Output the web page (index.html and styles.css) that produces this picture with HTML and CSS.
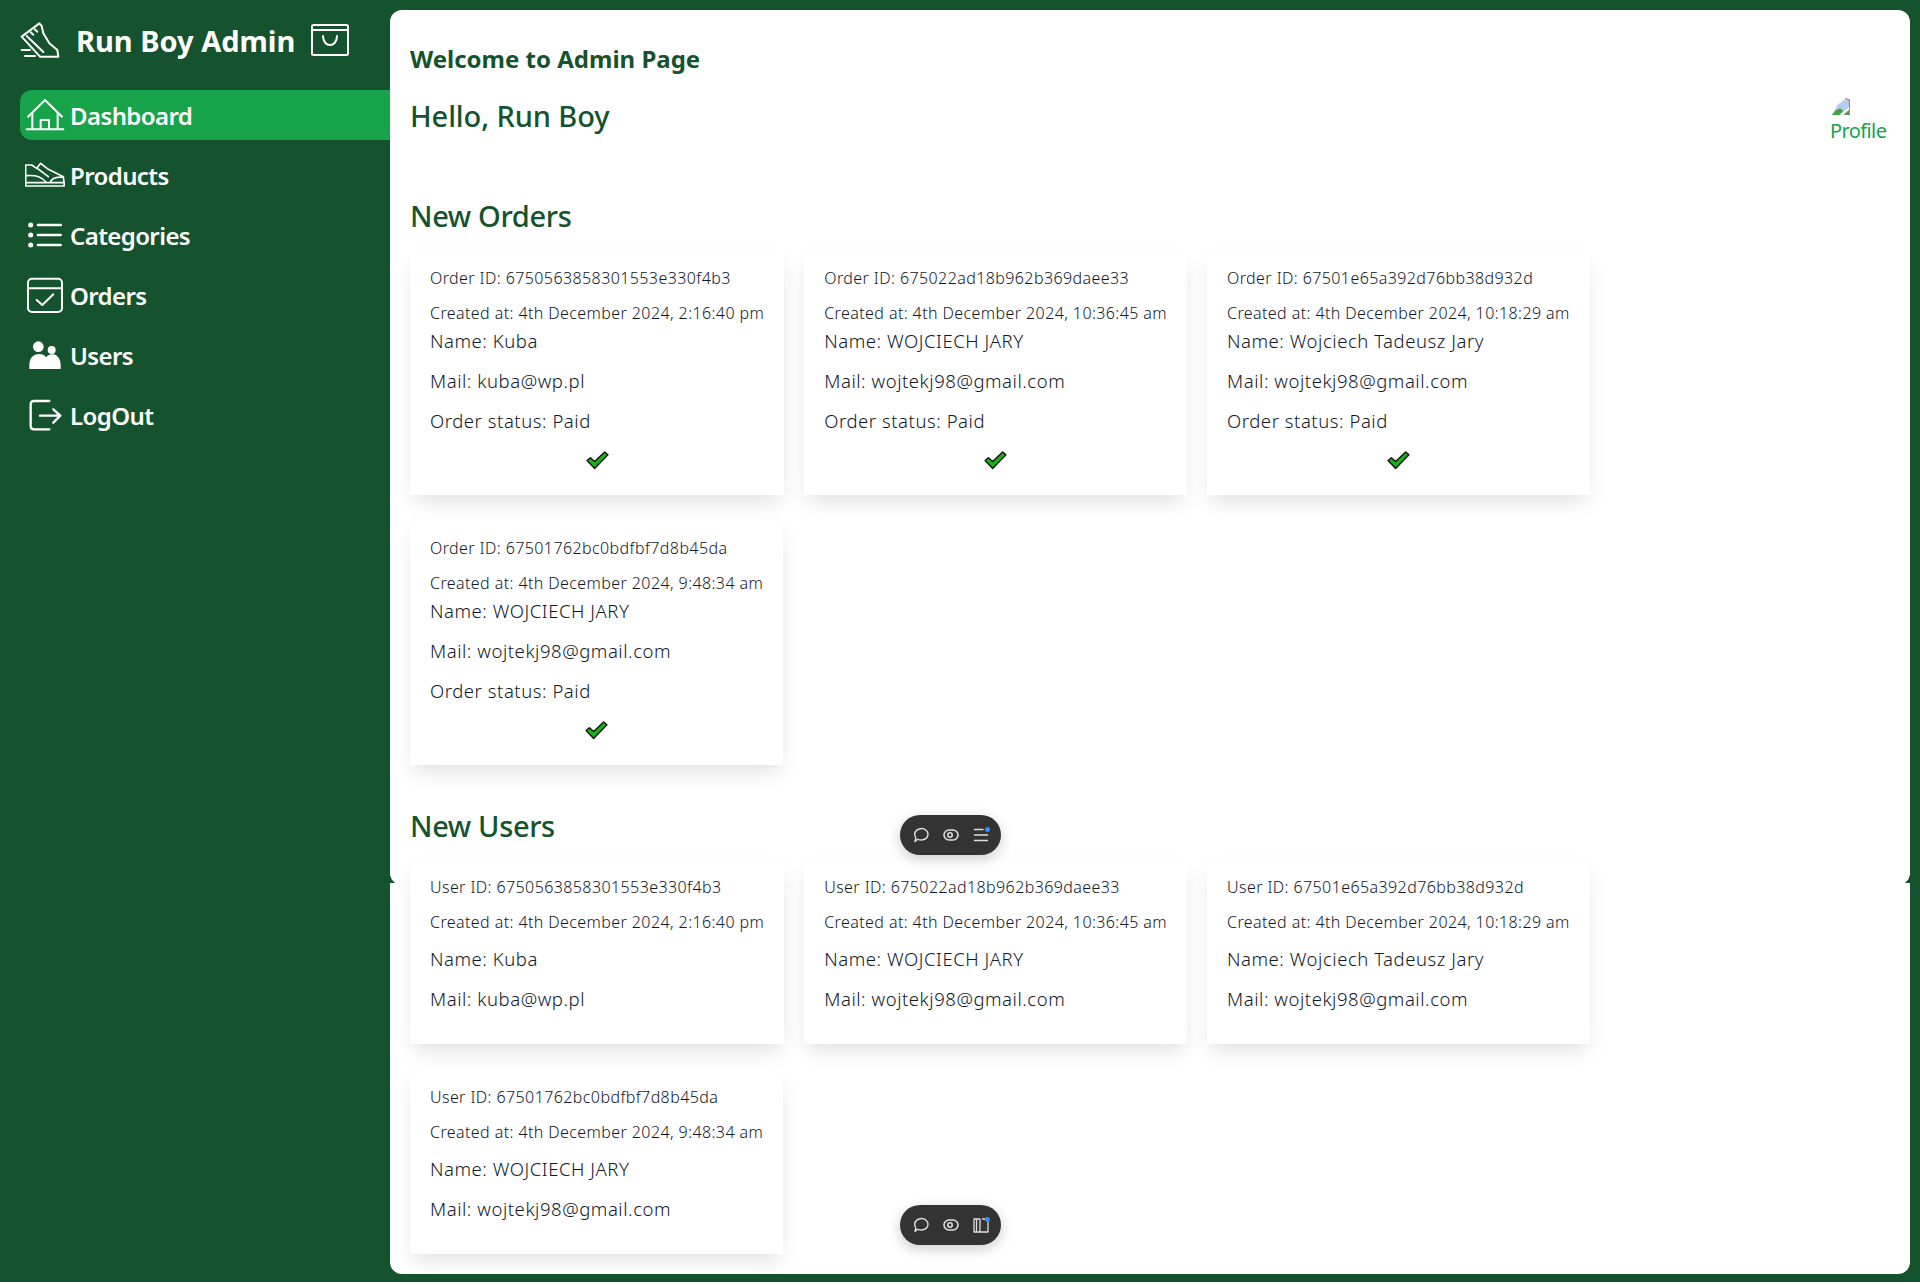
FILE: index.html
```html
<!DOCTYPE html>
<html lang="en">
<head>
    <meta charset="UTF-8">
    <meta name="viewport" content="width=device-width, initial-scale=1.0">
    <title>Run Boy Admin</title>
    <link rel="stylesheet" href="styles.css">
</head>
<body>

<div class="layout">
    <aside class="sidebar">
        <div class="brand">
            <svg class="brand-shoe" viewBox="60 66 120 108" fill="none" stroke="#fff" stroke-width="6" stroke-linejoin="round" stroke-linecap="round">
                <path d="M65 110 L118 70 L125 78 L130 100 L148 130 L172 150 L175 170 L120 170 Z"/>
                <path d="M80 108 L130 156 M92 97 L100 104 M104 88 L112 95"/>
                <path d="M65 150 L90 150 M75 168 L105 168"/>
            </svg>
            <span class="brand-name">Run Boy Admin</span>
            <svg class="brand-bag" viewBox="0 0 38 32" fill="none" stroke="#fff" stroke-width="2" stroke-linejoin="round" stroke-linecap="round">
                <rect x="1" y="1" width="36" height="30" rx="1.500"/>
                <path d="M1 6 L37 6"/>
                <path d="M12 12 C12 24 26 24 26 12"/>
            </svg>
        </div>
        <nav class="nav">
            <a class="nav-item active" href="#">
                <svg class="nav-icon" viewBox="75 291 120 108" fill="none" stroke="#fff" stroke-width="6" stroke-linecap="round" stroke-linejoin="round">
                    <path d="M84 350 L135 300 L186 350"/>
                    <path d="M97 338 L97 386 M173 338 L173 386 M80 388 L190 388"/>
                    <path d="M122 386 L122 360 L147 360 L147 386"/>
                </svg>
                <span>Dashboard</span>
            </a>
            <a class="nav-item" href="#">
                <svg class="nav-icon" viewBox="75 471 120 108" fill="none" stroke="#fff" stroke-width="5" stroke-linecap="round" stroke-linejoin="round">
                    <path d="M77 558 L77 495 L95 495 L110 505 L122 490 L145 508 L190 530 L193 558 Z"/>
                    <path d="M77 548 L193 548 M80 527 C110 525 125 530 140 548 M150 548 C155 535 170 530 190 532"/>
                    <path d="M112 505 L145 530"/>
                </svg>
                <span>Products</span>
            </a>
            <a class="nav-item" href="#">
                <svg class="nav-icon" viewBox="75 651 120 108" fill="none" stroke="#fff" stroke-width="8" stroke-linecap="round">
                    <path d="M114 675 L182 675 M114 705 L182 705 M114 735 L182 735"/>
                    <path d="M92 675 L92.100 675 M92 705 L92.100 705 M92 735 L92.100 735" stroke-width="15"/>
                </svg>
                <span>Categories</span>
            </a>
            <a class="nav-item" href="#">
                <svg class="nav-icon" viewBox="75 831 120 108" fill="none" stroke="#fff" stroke-width="6" stroke-linecap="round" stroke-linejoin="round">
                    <rect x="84" y="836" width="102" height="100" rx="12"/>
                    <path d="M84 865 L186 865"/>
                    <path d="M110 900 L127 915 L160 883"/>
                </svg>
                <span>Orders</span>
            </a>
            <a class="nav-item" href="#">
                <svg class="nav-icon" viewBox="75 1011 120 108" fill="#fff">
                    <circle cx="115" cy="1040" r="16"/>
                    <circle cx="155" cy="1050" r="12"/>
                    <path d="M88 1107 L88 1095 C88 1070 105 1062 118 1062 C128 1062 135 1067 138 1072 C142 1066 150 1063 158 1063 C172 1063 182 1078 182 1095 L182 1107 Z"/>
                </svg>
                <span>Users</span>
            </a>
            <a class="nav-item" href="#">
                <svg class="nav-icon" viewBox="75 1191 120 108" fill="none" stroke="#fff" stroke-width="7" stroke-linecap="round" stroke-linejoin="round">
                    <path d="M148 1203 L102 1203 C96 1203 92 1207 92 1213 L92 1278 C92 1284 96 1288 102 1288 L148 1288"/>
                    <path d="M120 1247 L180 1247 M160 1228 L181 1247 L160 1268"/>
                </svg>
                <span>LogOut</span>
            </a>
        </nav>
    </aside>

    <main class="panel">
        <h2 class="welcome">Welcome to Admin Page</h2>
        <div class="hello-row">
            <h1 class="hello">Hello, Run Boy</h1>
            <a class="profile" href="#">
                <svg class="broken-img" viewBox="36 24 54 51">
                    <path d="M36 75 L52 45 L72 30 L88 32 L88 50 L60 75 Z" fill="#b7cdf0"/>
                    <path d="M36 75 L46 62 L60 55 L70 62 L58 75 Z" fill="#3fa535"/>
                    <path d="M70 75 L88 58 L90 75 Z" fill="#6d8f5d"/>
                    <path d="M75 26 L88 30 L90 70" fill="none" stroke="#8a8a8a" stroke-width="4"/>
                </svg>
                <span>Profile</span>
            </a>
        </div>

        <section class="orders">
            <h2 class="block-title">New Orders</h2>
            <div class="cards">
                <div class="card">
                    <p class="small">Order ID: 6750563858301553e330f4b3</p>
                    <p class="small">Created at: 4th December 2024, 2:16:40 pm</p>
                    <p class="line first">Name: Kuba</p>
                    <p class="line">Mail: kuba@wp.pl</p>
                    <p class="line">Order status: Paid</p>
                    <svg class="check" viewBox="0 0 24 20"><path d="M1 10 L4.500 7 L9 11 L19.500 1 L23 4 L9 18.500 Z" fill="#16b316" stroke="#111" stroke-width="1.400" stroke-linejoin="round"/></svg>
                </div>
                <div class="card">
                    <p class="small">Order ID: 675022ad18b962b369daee33</p>
                    <p class="small">Created at: 4th December 2024, 10:36:45 am</p>
                    <p class="line first">Name: WOJCIECH JARY</p>
                    <p class="line">Mail: wojtekj98@gmail.com</p>
                    <p class="line">Order status: Paid</p>
                    <svg class="check" viewBox="0 0 24 20"><path d="M1 10 L4.500 7 L9 11 L19.500 1 L23 4 L9 18.500 Z" fill="#16b316" stroke="#111" stroke-width="1.400" stroke-linejoin="round"/></svg>
                </div>
                <div class="card">
                    <p class="small">Order ID: 67501e65a392d76bb38d932d</p>
                    <p class="small">Created at: 4th December 2024, 10:18:29 am</p>
                    <p class="line first">Name: Wojciech Tadeusz Jary</p>
                    <p class="line">Mail: wojtekj98@gmail.com</p>
                    <p class="line">Order status: Paid</p>
                    <svg class="check" viewBox="0 0 24 20"><path d="M1 10 L4.500 7 L9 11 L19.500 1 L23 4 L9 18.500 Z" fill="#16b316" stroke="#111" stroke-width="1.400" stroke-linejoin="round"/></svg>
                </div>
                <div class="card">
                    <p class="small">Order ID: 67501762bc0bdfbf7d8b45da</p>
                    <p class="small">Created at: 4th December 2024, 9:48:34 am</p>
                    <p class="line first">Name: WOJCIECH JARY</p>
                    <p class="line">Mail: wojtekj98@gmail.com</p>
                    <p class="line">Order status: Paid</p>
                    <svg class="check" viewBox="0 0 24 20"><path d="M1 10 L4.500 7 L9 11 L19.500 1 L23 4 L9 18.500 Z" fill="#16b316" stroke="#111" stroke-width="1.400" stroke-linejoin="round"/></svg>
                </div>
            </div>
        </section>

        <section class="users">
            <h2 class="block-title">New Users</h2>
            <div class="cards">
                <div class="card">
                    <p class="small">User ID: 6750563858301553e330f4b3</p>
                    <p class="small">Created at: 4th December 2024, 2:16:40 pm</p>
                    <p class="line">Name: Kuba</p>
                    <p class="line">Mail: kuba@wp.pl</p>
                </div>
                <div class="card">
                    <p class="small">User ID: 675022ad18b962b369daee33</p>
                    <p class="small">Created at: 4th December 2024, 10:36:45 am</p>
                    <p class="line">Name: WOJCIECH JARY</p>
                    <p class="line">Mail: wojtekj98@gmail.com</p>
                </div>
                <div class="card">
                    <p class="small">User ID: 67501e65a392d76bb38d932d</p>
                    <p class="small">Created at: 4th December 2024, 10:18:29 am</p>
                    <p class="line">Name: Wojciech Tadeusz Jary</p>
                    <p class="line">Mail: wojtekj98@gmail.com</p>
                </div>
                <div class="card">
                    <p class="small">User ID: 67501762bc0bdfbf7d8b45da</p>
                    <p class="small">Created at: 4th December 2024, 9:48:34 am</p>
                    <p class="line">Name: WOJCIECH JARY</p>
                    <p class="line">Mail: wojtekj98@gmail.com</p>
                </div>
            </div>
        </section>

        <div class="notch notch-left"></div>
        <div class="notch notch-right"></div>
    </main>
</div>

<div class="pill pill-top">
    <svg viewBox="0 0 16 16" fill="none" stroke="#dedede" stroke-width="1.400" stroke-linejoin="round"><path d="M8.500 1.500 C12 1.500 15 4 15 7.300 C15 10.500 12 13 8.500 13 C7 13 5.500 12.700 4.800 12.200 L2 14.500 L2.800 10.800 C2 9.700 1.700 8.500 1.700 7.300 C1.700 4 5 1.500 8.500 1.500 Z"/></svg>
    <svg viewBox="0 0 16 16" fill="none" stroke="#dedede" stroke-width="1.600"><rect x="1" y="3" width="14" height="10" rx="5"/><circle cx="7" cy="8" r="2.200"/></svg>
    <span class="pill-icon">
        <svg viewBox="0 0 16 16" fill="none" stroke="#dedede" stroke-width="1.400" stroke-linecap="round"><path d="M1.500 2.500 L10 2.500 M1.500 8 L14.500 8 M1.500 13.500 L14.500 13.500"/></svg>
        <i class="dot"></i>
    </span>
</div>
<div class="pill pill-bottom">
    <svg viewBox="0 0 16 16" fill="none" stroke="#dedede" stroke-width="1.400" stroke-linejoin="round"><path d="M8.500 1.500 C12 1.500 15 4 15 7.300 C15 10.500 12 13 8.500 13 C7 13 5.500 12.700 4.800 12.200 L2 14.500 L2.800 10.800 C2 9.700 1.700 8.500 1.700 7.300 C1.700 4 5 1.500 8.500 1.500 Z"/></svg>
    <svg viewBox="0 0 16 16" fill="none" stroke="#dedede" stroke-width="1.600"><rect x="1" y="3" width="14" height="10" rx="5"/><circle cx="7" cy="8" r="2.200"/></svg>
    <span class="pill-icon">
        <svg viewBox="0 0 16 16" fill="none" stroke="#dedede" stroke-width="1.300" stroke-linejoin="round"><path d="M1 2 L7 2 L7 15 L1 15 Z M9 2 L15 2 L15 15 L7 15 M3.500 2 L3.500 15"/></svg>
        <i class="dot"></i>
    </span>
</div>

</body>
</html>
```

FILE: styles.css
```css
* {
    box-sizing: border-box;
}

html {
    background-color: #fff;
}

body {
    font-family: "Noto Sans", "Open Sans", sans-serif;
    margin: 0;
    height: 1282px;
    background-color: #14532d;
    overflow: hidden;
}

.layout {
    display: flex;
    height: 100%;
    padding: 10px 10px 8px 0;
}

.sidebar {
    width: 390px;
    flex-shrink: 0;
    padding: 10px 0 0 20px;
    color: #fff;
}

.brand {
    display: flex;
    align-items: center;
    height: 40px;
}

.brand-shoe {
    width: 40px;
    height: 36px;
}

.brand-name {
    margin-left: 16px;
    font-size: 29px;
    font-weight: 700;
}

.brand-bag {
    width: 38px;
    height: 32px;
    margin-left: 16px;
}

.nav {
    margin-top: 30px;
    display: flex;
    flex-direction: column;
    gap: 10px;
}

.nav-item {
    display: flex;
    align-items: center;
    height: 50px;
    padding-left: 5px;
    color: #fff;
    text-decoration: none;
    font-size: 24px;
    font-weight: 600;
    letter-spacing: -0.6px;
    border-radius: 12px 0 0 12px;
}

.nav-item.active {
    background-color: #16a34a;
}

.nav-icon {
    width: 40px;
    height: 36px;
    margin-right: 5px;
    flex-shrink: 0;
}

.panel {
    position: relative;
    flex: 1;
    min-width: 0;
    background-color: #fff;
    border-radius: 12px;
    padding: 29px 20px 0;
    color: #14532d;
}

.welcome {
    margin: 0;
    font-size: 24px;
    line-height: 40px;
    font-weight: 700;
}

.hello-row {
    display: flex;
    justify-content: space-between;
    margin-top: 17px;
}

.hello {
    margin: 0;
    font-size: 29px;
    line-height: 40px;
    font-weight: 500;
    letter-spacing: -0.1px;
}

.profile {
    display: flex;
    flex-direction: column;
    align-items: flex-start;
    gap: 4px;
    width: 56px;
    margin: 2px 4px 0 0;
    color: #16a34a;
    text-decoration: none;
    font-size: 20px;
    line-height: 24px;
    letter-spacing: -0.6px;
}

.broken-img {
    width: 18px;
    height: 17px;
    margin-left: 2px;
}

.block-title {
    margin: 0;
    font-size: 29px;
    line-height: 40px;
    font-weight: 500;
    letter-spacing: -0.35px;
}

.orders {
    margin-top: 53px;
}

.users {
    margin-top: 41px;
}

.cards {
    display: flex;
    flex-wrap: wrap;
    column-gap: 20px;
    row-gap: 25px;
    margin-top: 14px;
}

.users .cards {
    margin-top: 13px;
}

.card {
    display: flex;
    flex-direction: column;
    padding: 10px 20px 25px;
    background-color: #fff;
    box-shadow: 0 10px 20px -4px rgba(0, 0, 0, 0.13);
    color: #111827;
}

.card p {
    margin: 0;
}

.small {
    font-size: 16px;
    font-weight: 300;
    line-height: 24px;
    padding: 6px 0 5px;
    letter-spacing: 0.41px;
    white-space: nowrap;
}

.line {
    font-size: 18.5px;
    font-weight: 300;
    line-height: 28px;
    padding: 6px 0;
    letter-spacing: 0.55px;
    white-space: nowrap;
}

.card .line.first {
    padding-top: 0;
    margin-top: -3px;
}

.check {
    width: 23px;
    height: 19px;
    margin: 10px auto 0;
}

.notch {
    position: absolute;
    top: 865px;
    width: 5px;
    height: 8px;
    background-color: #14532d;
}

.notch-left {
    left: 0;
    clip-path: polygon(0 0, 35% 55%, 100% 100%, 0 100%);
}

.notch-right {
    right: 0;
    clip-path: polygon(100% 0, 65% 55%, 0 100%, 100% 100%);
}

.pill {
    position: absolute;
    left: 900px;
    width: 101px;
    height: 40px;
    display: flex;
    align-items: center;
    justify-content: space-between;
    padding: 0 12px 0 13px;
    background-color: #333;
    border-radius: 20px;
    box-shadow: 0 4px 14px rgba(0, 0, 0, 0.2);
}

.pill-top {
    top: 815px;
}

.pill-bottom {
    top: 1205px;
}

.pill svg {
    width: 16px;
    height: 16px;
    display: block;
}

.pill-icon {
    position: relative;
}

.dot {
    position: absolute;
    top: 0;
    right: -1px;
    width: 5px;
    height: 5px;
    border-radius: 50%;
    background-color: #3b8cff;
}
```
